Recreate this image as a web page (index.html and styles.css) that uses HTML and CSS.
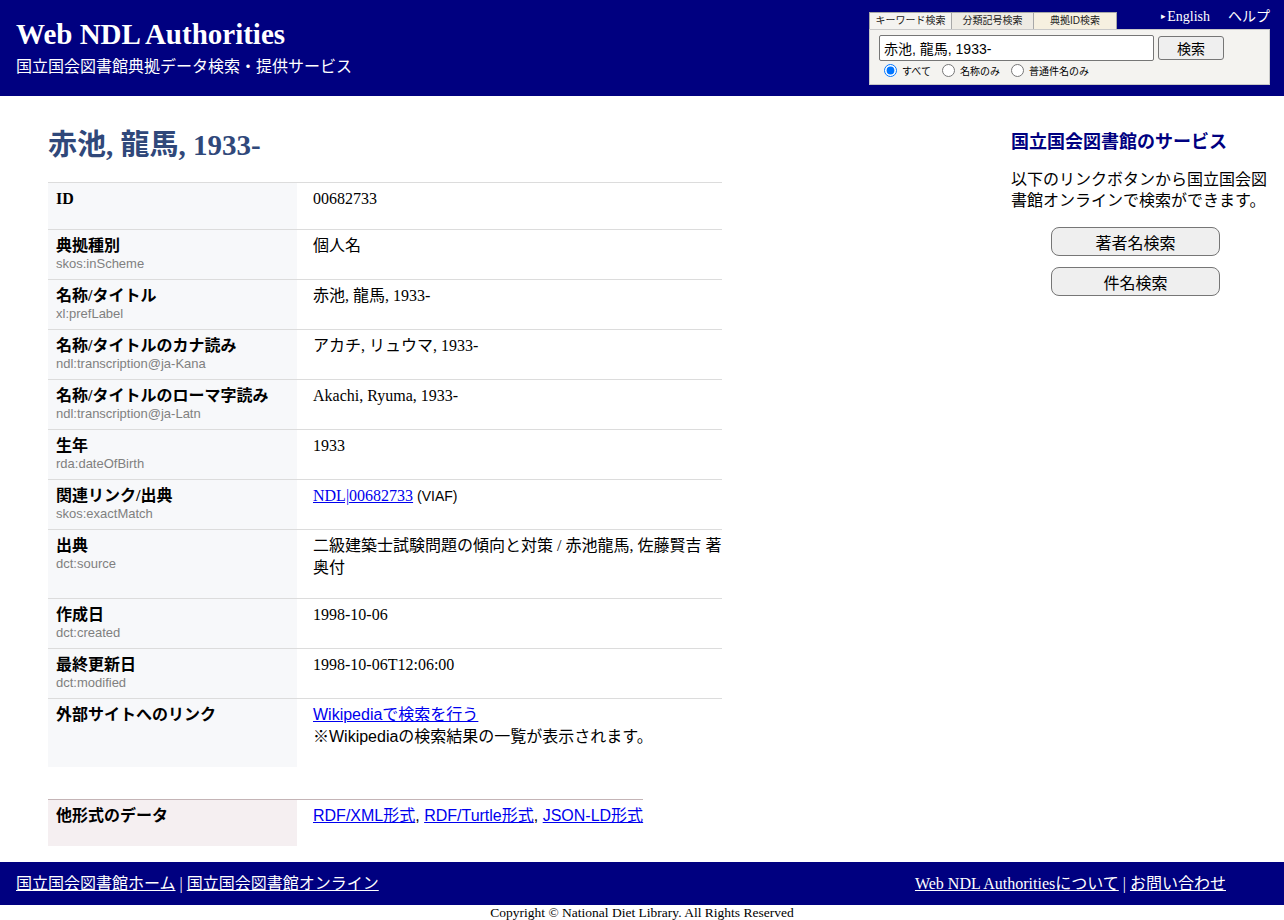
FILE: index.html
```html
<!DOCTYPE html>
<html lang="ja">
<head>
<meta charset="utf-8">
<title>赤池, 龍馬, 1933- - Web NDL Authorities</title>
<link rel="stylesheet" href="styles.css">
</head>
<body>
<header class="hdr">
  <div class="brand">
    <div class="brand-title">Web NDL Authorities</div>
    <div class="brand-sub">国立国会図書館典拠データ検索・提供サービス</div>
  </div>
  <div class="search">
    <div class="search-top">
      <div class="tabs">
        <span class="tab tab-on">キーワード検索</span>
        <span class="tab tab-2">分類記号検索</span>
        <span class="tab tab-3">典拠ID検索</span>
      </div>
      <div class="toplinks">
        <a class="toplink en" href="#"><span class="tri">&#9656;</span>English</a>
        <a class="toplink help" href="#">ヘルプ</a>
      </div>
    </div>
    <div class="panel">
      <div class="qrow">
        <input class="q" type="text" value="赤池, 龍馬, 1933-">
        <button class="qbtn" type="button">検索</button>
      </div>
      <div class="opts">
        <label class="opt"><input type="radio" name="t" checked>すべて</label>
        <label class="opt"><input type="radio" name="t">名称のみ</label>
        <label class="opt"><input type="radio" name="t">普通件名のみ</label>
      </div>
    </div>
  </div>
</header>

<main class="main">
  <section class="content">
    <h1 class="title">赤池, 龍馬, 1933-</h1>
    <div class="tbl">
      <div class="row">
        <div class="lbl"><div class="lname">ID</div></div>
        <div class="val">00682733</div>
      </div>
      <div class="row">
        <div class="lbl"><div class="lname">典拠種別</div><div class="lsub">skos:inScheme</div></div>
        <div class="val">個人名</div>
      </div>
      <div class="row">
        <div class="lbl"><div class="lname">名称/タイトル</div><div class="lsub">xl:prefLabel</div></div>
        <div class="val">赤池, 龍馬, 1933-</div>
      </div>
      <div class="row">
        <div class="lbl"><div class="lname">名称/タイトルのカナ読み</div><div class="lsub">ndl:transcription@ja-Kana</div></div>
        <div class="val">アカチ, リュウマ, 1933-</div>
      </div>
      <div class="row">
        <div class="lbl"><div class="lname">名称/タイトルのローマ字読み</div><div class="lsub">ndl:transcription@ja-Latn</div></div>
        <div class="val">Akachi, Ryuma, 1933-</div>
      </div>
      <div class="row">
        <div class="lbl"><div class="lname">生年</div><div class="lsub">rda:dateOfBirth</div></div>
        <div class="val">1933</div>
      </div>
      <div class="row">
        <div class="lbl"><div class="lname">関連リンク/出典</div><div class="lsub">skos:exactMatch</div></div>
        <div class="val"><a href="#">NDL|00682733</a> <span class="note">(VIAF)</span></div>
      </div>
      <div class="row">
        <div class="lbl"><div class="lname">出典</div><div class="lsub">dct:source</div></div>
        <div class="val val2">二級建築士試験問題の傾向と対策 / 赤池龍馬, 佐藤賢吉 著<br>奥付</div>
      </div>
      <div class="row">
        <div class="lbl"><div class="lname">作成日</div><div class="lsub">dct:created</div></div>
        <div class="val">1998-10-06</div>
      </div>
      <div class="row">
        <div class="lbl"><div class="lname">最終更新日</div><div class="lsub">dct:modified</div></div>
        <div class="val">1998-10-06T12:06:00</div>
      </div>
      <div class="row">
        <div class="lbl"><div class="lname">外部サイトへのリンク</div></div>
        <div class="val val2 sans"><a href="#">Wikipediaで検索を行う</a><br>※Wikipediaの検索結果の一覧が表示されます。</div>
      </div>
    </div>

    <div class="tbl tbl2">
      <div class="row">
        <div class="lbl"><div class="lname">他形式のデータ</div></div>
        <div class="val sans"><a href="#">RDF/XML形式</a>, <a href="#">RDF/Turtle形式</a>, <a href="#">JSON-LD形式</a></div>
      </div>
    </div>
  </section>

  <aside class="side">
    <h2 class="side-title">国立国会図書館のサービス</h2>
    <p class="side-text">以下のリンクボタンから国立国会図書館オンラインで検索ができます。</p>
    <div class="side-btns">
      <button class="sbtn" type="button">著者名検索</button>
      <button class="sbtn" type="button">件名検索</button>
    </div>
  </aside>
</main>

<footer class="ftr">
  <div class="fbar">
    <div class="flinks"><a href="#">国立国会図書館ホーム</a> | <a href="#">国立国会図書館オンライン</a></div>
    <div class="flinks"><a href="#">Web NDL Authoritiesについて</a> | <a href="#">お問い合わせ</a></div>
  </div>
  <div class="copy">Copyright © National Diet Library. All Rights Reserved</div>
</footer>
</body>
</html>
```

FILE: styles.css
```css
* { box-sizing: border-box; }
html, body { margin: 0; padding: 0; }
body {
  background: #ffffff;
  color: #000;
  font-family: "Liberation Serif", "Noto Sans CJK JP", serif;
  font-size: 16px;
}
a { color: #0000ee; }

/* header */
.hdr {
  background: #000080;
  height: 96px;
  display: flex;
  justify-content: space-between;
  padding: 0 14px 0 16px;
}
.brand { padding-top: 16px; color: #fff; }
.brand-title {
  font-family: "Liberation Serif", serif;
  font-weight: bold;
  font-size: 29px;
  line-height: 36px;
}
.brand-sub {
  font-family: "Liberation Sans", "Noto Sans CJK JP", sans-serif;
  font-size: 16px;
  line-height: 20px;
  margin-top: 5px;
}
.search { width: 401px; padding-top: 6px; }
.search-top { display: flex; justify-content: space-between; align-items: flex-end; height: 23px; }
.tabs { display: flex; }
.tab {
  font-family: "Liberation Sans", "Noto Sans CJK JP", sans-serif;
  font-size: 10px;
  height: 17px;
  line-height: 16px;
  text-align: center;
  border: 1px solid #a8a8a8;
  border-bottom: none;
  color: #222;
}
.tab-on { width: 83px; background: #f4f3f0; }
.tab-2 { width: 82px; background: #eeebe4; border-left: none; }
.tab-3 { width: 83px; background: #f6f0e0; border-left: none; }
.toplinks { display: flex; gap: 18px; align-self: flex-start; padding-top: 2px; }
.toplink { color: #fff; text-decoration: none; font-size: 14px; line-height: 16px; }
.en { font-family: "Liberation Serif", serif; }
.tri { font-size: 9px; vertical-align: 2px; margin-right: 1px; }
.help { font-family: "Liberation Sans", "Noto Sans CJK JP", sans-serif; }
.panel {
  background: #f4f3f0;
  border: 1px solid #c8c8c8;
  height: 56px;
  padding: 5px 0 0 9px;
}
.qrow { display: flex; align-items: center; gap: 4px; }
.q {
  width: 275px;
  height: 26px;
  margin: 0;
  border: 1px solid #767676;
  border-radius: 2px;
  padding: 1px 4px;
  font-family: "Liberation Sans", "Noto Sans CJK JP", sans-serif;
  font-size: 14px;
  background: #fff;
}
.qbtn {
  width: 66px;
  height: 24px;
  margin: 0;
  border: 1px solid #767676;
  border-radius: 3px;
  background: #efefef;
  font-family: "Liberation Sans", "Noto Sans CJK JP", sans-serif;
  font-size: 14px;
  padding: 0;
}
.opts { display: flex; margin-top: 2px; }
.opt {
  font-family: "Liberation Sans", "Noto Sans CJK JP", sans-serif;
  font-size: 10px;
  display: flex;
  align-items: center;
  margin-right: 6px;
}
.opt input { margin: 0 5px 0 5px; width: 13px; height: 13px; }

/* main */
.main { display: flex; padding: 0 14px 0 48px; }
.content { width: 674px; }
.title {
  font-family: "Liberation Serif", "Noto Sans CJK JP", serif;
  font-size: 29px;
  font-weight: bold;
  color: #30487a;
  margin: 0;
  line-height: 36px;
  height: 86px;
  padding: 31px 0 0;
}
.row { display: flex; border-top: 1px solid #dcdcdc; }
.lbl {
  width: 249px;
  flex-shrink: 0;
  background: #f7f8fa;
  padding: 5px 8px 7px;
}
.lname { font-weight: bold; line-height: 21px; }
.lsub {
  font-family: "Liberation Sans", sans-serif;
  font-size: 13px;
  line-height: 16px;
  color: #808080;
}
.val {
  flex: 1;
  padding: 5px 0 20px 16px;
  line-height: 21px;
}
.val2 { line-height: 21.5px; }
.sans { font-family: "Liberation Sans", "Noto Sans CJK JP", sans-serif; }
.note { font-family: "Liberation Sans", sans-serif; font-size: 14px; }
.tbl2 { width: fit-content; margin-top: 32px; }
.tbl2 .row { border-top: 1px solid #c4b4b6; }
.tbl2 .lbl { background: #f5eff1; }
.tbl2 .val { flex: none; white-space: nowrap; }

/* sidebar */
.side { margin-left: auto; width: 259px; padding-top: 33px; }
.side-title {
  font-family: "Liberation Sans", "Noto Sans CJK JP", sans-serif;
  font-size: 18px;
  font-weight: bold;
  color: #000080;
  margin: 0;
  line-height: 26px;
}
.side-text {
  font-family: "Liberation Sans", "Noto Sans CJK JP", sans-serif;
  font-size: 16px;
  line-height: 21px;
  margin: 14px 0 16px;
}
.side-btns { display: flex; flex-direction: column; gap: 11px; padding-left: 40px; }
.sbtn {
  width: 169px;
  height: 29px;
  margin: 0;
  border: 1px solid #767676;
  border-radius: 8px;
  background: #efefef;
  font-family: "Liberation Sans", "Noto Sans CJK JP", sans-serif;
  font-size: 16px;
  padding: 0;
}

/* footer */
.ftr { margin-top: 16px; }
.fbar {
  background: #000080;
  height: 43px;
  display: flex;
  justify-content: space-between;
  align-items: center;
  padding: 0 58px 0 16px;
  color: #fff;
}
.flinks { font-size: 16px; line-height: 20px; }
.flinks a { color: #fff; }
.copy {
  text-align: center;
  font-size: 13.5px;
  line-height: 15px;
  font-family: "Liberation Serif", serif;
}
```
